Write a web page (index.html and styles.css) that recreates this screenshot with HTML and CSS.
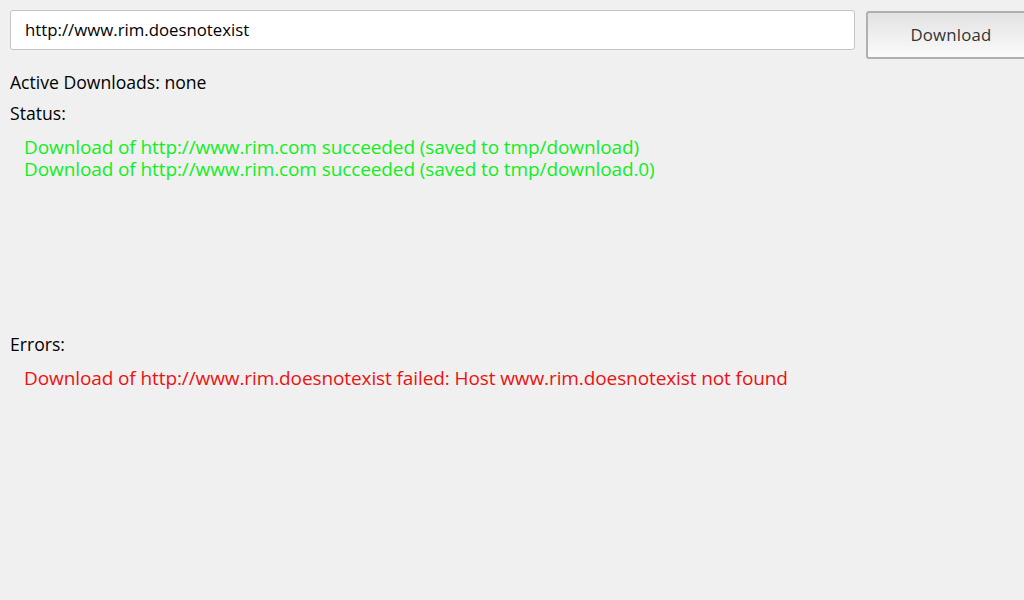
FILE: index.html
```html
<!DOCTYPE html>
<html>
<head>
<meta charset="utf-8">
<link rel="stylesheet" href="styles.css">
</head>
<body>
<div class="top">
  <div class="url">http://www.rim.doesnotexist</div>
  <div class="btn">Download</div>
</div>
<div class="label active">Active Downloads: none</div>
<div class="label status">Status:</div>
<div class="log ok">
  <div>Download of http://www.rim.com succeeded (saved to tmp/download)</div>
  <div>Download of http://www.rim.com succeeded (saved to tmp/download.0)</div>
</div>
<div class="label errors">Errors:</div>
<div class="log err">
  <div>Download of http://www.rim.doesnotexist failed: Host www.rim.doesnotexist not found</div>
</div>
</body>
</html>
```

FILE: styles.css
```css
html, body { margin: 0; padding: 0; }
body {
  width: 1024px; height: 600px; overflow: hidden;
  background: #f0f0f0;
  font-family: "Open Sans", sans-serif;
  font-size: 17.6px;
  color: #000;
}
.top {
  display: flex;
  padding: 10px 0 0 10px;
  gap: 11px;
  height: 50px;
}
.url {
  flex: 0 0 845px;
  height: 40px;
  box-sizing: border-box;
  border: 1px solid #c4c4c4;
  border-radius: 3px;
  background: #fff;
  padding-left: 14px;
  line-height: 38px;
  font-size: 16.8px;
}
.btn {
  flex: 0 0 170px;
  height: 48px;
  margin-top: 1px;
  box-sizing: border-box;
  border: 2px solid #b0b0b0;
  border-radius: 3px;
  background: linear-gradient(#e2e2e2, #fbfbfb);
  text-align: center;
  line-height: 44px;
  font-size: 16.8px;
  color: #333;
  letter-spacing: 0.2px;
}
.label { padding-left: 10px; line-height: 22px; }
.active { margin-top: 11px; }
.status { margin-top: 9px; }
.log { padding-left: 24px; line-height: 22px; margin-top: 12px; font-size: 19px; letter-spacing: -0.1px; }
.ok { color: #11ee22; height: 197px; }
.err { color: #ee1111; }
.errors { margin-top: 0; }
```
